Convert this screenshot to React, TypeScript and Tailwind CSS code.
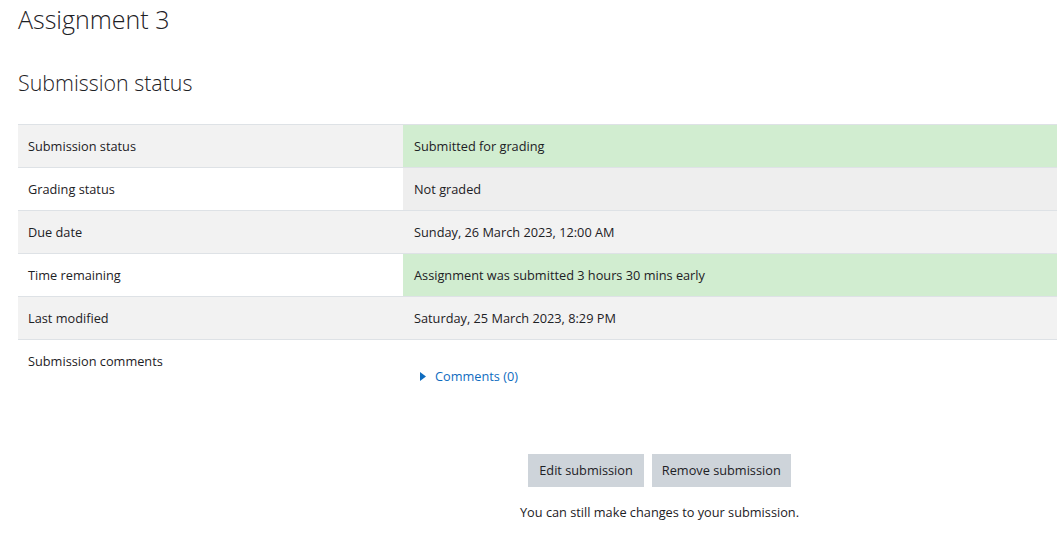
import React from "react"

type Row = { label: string; value: string; labelBg: string; valueBg: string }

const rows: Row[] = [
  { label: "Submission status", value: "Submitted for grading", labelBg: "bg-[#f2f2f2]", valueBg: "bg-[#d1edd0]" },
  { label: "Grading status", value: "Not graded", labelBg: "bg-white", valueBg: "bg-[#eeeeee]" },
  { label: "Due date", value: "Sunday, 26 March 2023, 12:00 AM", labelBg: "bg-[#f2f2f2]", valueBg: "bg-[#f2f2f2]" },
  { label: "Time remaining", value: "Assignment was submitted 3 hours 30 mins early", labelBg: "bg-white", valueBg: "bg-[#d1edd0]" },
  { label: "Last modified", value: "Saturday, 25 March 2023, 8:29 PM", labelBg: "bg-[#f2f2f2]", valueBg: "bg-[#f2f2f2]" },
]

export default function App() {
  return (
    <div className="h-[535px] w-full overflow-hidden bg-white font-['Open_Sans',sans-serif] text-[#1d2125]">
      <h2 className="pl-[18px] pt-[1px] text-[25px] font-light leading-[36px] text-[#1d2125]">Assignment 3</h2>
      <h3 className="mt-[30px] pl-[18px] text-[21.4px] font-light leading-[32px] text-[#1d2125]">Submission status</h3>

      <div className="ml-[18px] mt-[25px] w-[1100px] text-[12.75px]">
        {rows.map((r) => (
          <div key={r.label} className="flex h-[43px] border-t border-[#dee2e6]">
            <div className={`flex w-[385px] items-center pl-[10px] pt-[2px] ${r.labelBg}`}>{r.label}</div>
            <div className={`flex flex-1 items-center pl-[11px] pt-[2px] ${r.valueBg}`}>{r.value}</div>
          </div>
        ))}
        <div className="flex h-[70px] border-t border-[#dee2e6]">
          <div className="w-[385px] pl-[10px] pt-[12px]">Submission comments</div>
          <div className="flex-1 pl-[17px] pt-[27px]">
            <a className="flex items-center gap-[9px] text-[#0f6cbf]">
              <svg width="6" height="9" viewBox="0 0 6 9">
                <path d="M0 0 L6 4.5 L0 9 Z" fill="#0f6cbf" />
              </svg>
              Comments (0)
            </a>
          </div>
        </div>
      </div>

      <div className="mt-[45px] flex w-[1057px] flex-col items-center pl-[262px] text-[12.75px]">
        <div className="flex gap-[8px]">
          <button className="h-[33px] bg-[#ced4da] px-[11px]">Edit submission</button>
          <button className="h-[33px] bg-[#ced4da] px-[10px]">Remove submission</button>
        </div>
        <p className="mt-[16px]">You can still make changes to your submission.</p>
      </div>
    </div>
  )
}
